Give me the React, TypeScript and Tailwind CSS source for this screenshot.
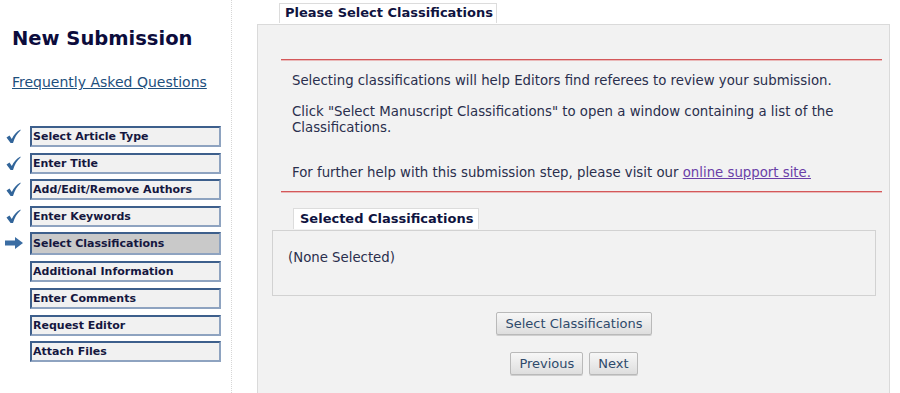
import React from "react";

const steps = [
  { label: "Select Article Type", state: "done" },
  { label: "Enter Title", state: "done" },
  { label: "Add/Edit/Remove Authors", state: "done" },
  { label: "Enter Keywords", state: "done" },
  { label: "Select Classifications", state: "current" },
  { label: "Additional Information", state: "todo" },
  { label: "Enter Comments", state: "todo" },
  { label: "Request Editor", state: "todo" },
  { label: "Attach Files", state: "todo" },
];

const Check = () => (
  <svg width="15" height="15" viewBox="0 0 15 15">
    <path d="M0.5 8.5 L3.5 6.5 L5.8 10 C7.8 5.8 10.5 2.6 14.5 0.5 L14.5 1.5 C11 4.5 8.6 8.6 7 14 L4.6 14 Z" fill="#32659a" />
  </svg>
);

const Arrow = () => (
  <svg width="18" height="12" viewBox="0 0 18 12">
    <path d="M0 3.5 H10 V0 L18 6 L10 12 V8.5 H0 Z" fill="#3b6da3" />
  </svg>
);

const GrayButton = ({ text }: { text: string }) => (
  <button className="h-[23px] px-[8px] border border-[#b9b9b9] rounded-[2px] bg-gradient-to-b from-[#f7f7f7] to-[#dedede] text-[13px] text-[#2e4a6b] leading-none shadow-[0_1px_0_#cfcfcf]">
    {text}
  </button>
);

export default function App() {
  return (
    <div className="flex w-[900px] h-[393px] bg-white font-['DejaVu_Sans',Verdana,sans-serif] text-[#27304a]">
      <aside className="w-[232px] shrink-0 border-r border-dotted border-[#d6d6d6]">
        <h1 className="pl-3 pt-[27px] text-[19.5px] font-bold text-[#0c0c3c] leading-6">
          New Submission
        </h1>
        <a href="#" className="block pl-3 mt-[21px] text-[14px] text-[#1d4f7d] underline leading-5">
          Frequently Asked Questions
        </a>
        <ul className="mt-[34px] flex flex-col">
          {steps.map((s) => (
            <li
              key={s.label}
              className={`flex items-start ${s.state === "current" ? "h-[29px]" : "h-[26.6px]"}`}
            >
              <span className="w-[30px] h-[21px] shrink-0 flex items-center justify-center pr-[3px]">
                {s.state === "done" && <Check />}
                {s.state === "current" && <Arrow />}
              </span>
              <span
                className={`w-[191px] flex items-center border-2 border-[#3d5f8c] border-r-[#8ea3c0] border-b-[#8ea3c0] pl-[1px] text-[11px] font-bold text-[#15173f] leading-none ${
                  s.state === "current" ? "bg-[#c9c9c9] h-[23px]" : "bg-[#f1f1f1] h-[21px]"
                }`}
              >
                {s.label}
              </span>
            </li>
          ))}
        </ul>
      </aside>

      <main className="flex-1 pl-[25px] pr-[10px]">
        <div className="ml-[22px] inline-block w-[218px] h-[20px] bg-white border border-b-0 border-[#dcdcdc] text-[13px] font-bold text-[#0f1340] pl-[5px] leading-[18px]">
          Please Select Classifications
        </div>
        <section className="h-[371px] bg-[#f2f2f2] border border-[#dadada] pl-[23px] pr-[7px] pt-[34px]">
          <div className="h-px bg-[#d4585a] shadow-[0_1px_0_#eab9b9]" />
          <div className="pl-[11px] pt-[13px] text-[13.3px] leading-4 text-[#2a2f4d]">
            <p>Selecting classifications will help Editors find referees to review your submission.</p>
            <p className="mt-[15px] pr-8">
              Click "Select Manuscript Classifications" to open a window containing a list of the Classifications.
            </p>
            <p className="mt-[29px]">
              For further help with this submission step, please visit our{" "}
              <a href="#" className="text-[#6a3fa8] underline">online support site.</a>
            </p>
          </div>
          <div className="mt-[10px] h-px bg-[#d4585a] shadow-[0_1px_0_#eab9b9]" />
          <div className="-ml-[9px] mr-[6px] mt-[14px]">
            <div className="ml-[21px] inline-block w-[186px] h-[21px] bg-white border border-b-0 border-[#dcdcdc] text-[13px] font-bold text-[#0f1340] pl-[6px] leading-[20px]">
              Selected Classifications
            </div>
            <div className="h-[66px] border border-[#d2d2d2] pl-[15px] pt-[19px] text-[13.3px] text-[#2a2f4d] leading-4">
              (None Selected)
            </div>
          </div>
          <div className="flex flex-col items-center mt-[16px] pr-[15px]">
            <GrayButton text="Select Classifications" />
            <div className="flex gap-[6px] mt-[17px]">
              <GrayButton text="Previous" />
              <GrayButton text="Next" />
            </div>
          </div>
        </section>
      </main>
    </div>
  );
}
